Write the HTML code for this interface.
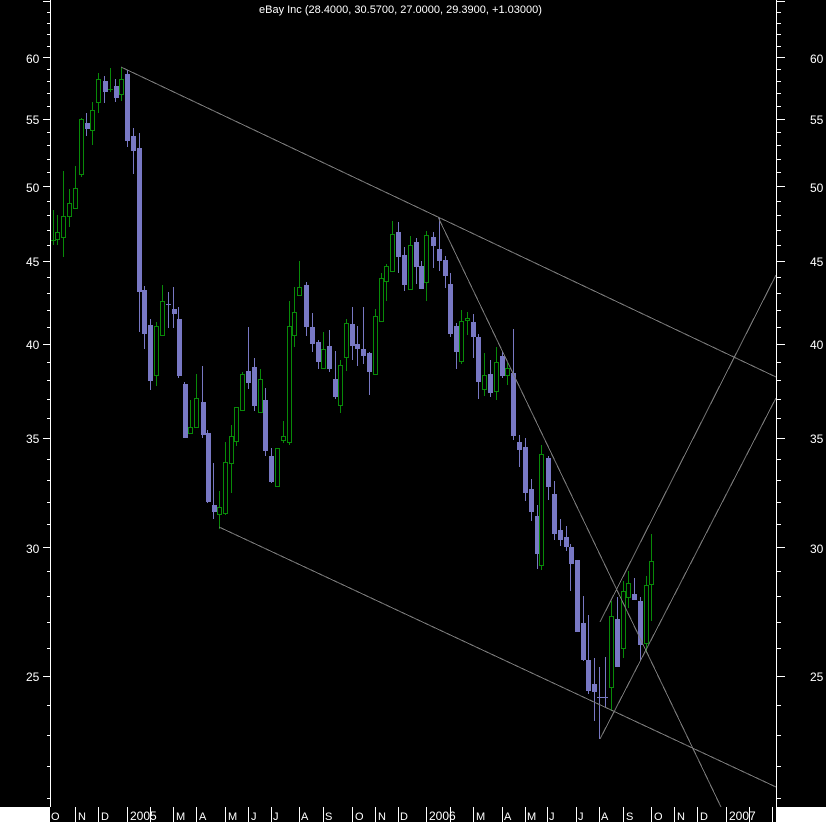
<!DOCTYPE html>
<html><head><meta charset="utf-8"><title>eBay Inc</title>
<style>
html,body{margin:0;padding:0;background:#000;width:826px;height:822px;overflow:hidden}
svg{display:block}
text{font-family:"Liberation Sans",sans-serif;font-size:12px;fill:#fff}
text.t{font-size:11px}
.m text{font-size:11px}
</style></head><body>
<svg width="826" height="822" viewBox="0 0 826 822" xmlns="http://www.w3.org/2000/svg">
<rect width="826" height="822" fill="#000"/>
<!-- blue wicks -->
<path fill="none" stroke="#7878c4" stroke-width="1" shape-rendering="crispEdges" d="M86.5 113V136M104.5 76V103M115.5 79V102M127.5 70V147M133.5 128V174M139.5 133V332M144.5 286V349M150.5 319V390M168.5 292V328M166 304.5H171M173.5 287V328M178.5 307V378M184.5 382V438M202.5 366V438M207.5 430V503M213.5 463V519M248.5 327V389M254.5 358V411M265.5 388V456M271.5 448V483M306.5 282V336M312.5 313V352M318.5 340V369M329.5 330V372M335.5 351V399M352.5 307V360M357.5 326V366M363.5 307V364M369.5 352V395M398.5 222V273M404.5 247V291M416.5 238V284M421.5 261V289M433.5 232V268M439.5 218V271M445.5 256V288M450.5 273V337M456.5 323V369M473.5 314V358M478.5 334V399M490.5 360V397M502.5 351V378M513.5 329V440M519.5 435V467M525.5 438V501M531.5 479V521M537.5 505V569M548.5 456V500M554.5 481V540M560.5 519V546M566.5 526V551M570.5 544V591M583.5 596V661M588.5 615V694M594.5 658V721M599.5 667V739M605.5 657V708M597 697.5H608M617.5 597V667M634.5 578V600M640.5 597V660"/>
<!-- blue bodies -->
<path fill="none" stroke="#7878c4" stroke-width="5" shape-rendering="crispEdges" d="M87.5 123V129M105.5 81V92M116.5 86V98M127.5 74V141M133.5 136V151M139.5 148V292M144.5 290V334M150.5 325V381M174.5 309V314M179.5 319V376M185.5 384V438M203.5 402V435M208.5 433V502M214.5 505V512M248.5 371V383M254.5 367V406M265.5 400V451M271.5 456V482M306.5 285V327M312.5 327V344M318.5 342V362M329.5 346V369M335.5 379V397M352.5 324V346M357.5 344V349M363.5 349V356M369.5 353V372M398.5 232V257M404.5 255V285M416.5 242V267M421.5 266V289M433.5 237V246M439.5 249V261M445.5 260V276M450.5 284V334M456.5 326V352M473.5 322V337M478.5 337V382M490.5 374V393M502.5 356V376M513.5 373V436M519.5 442V450M525.5 447V493M531.5 489V512M537.5 516V554M548.5 458V487M554.5 494V534M560.5 530V540M566.5 537V547M571.5 547V564M577.5 560V632M583.5 623V660M588.5 660V691M594.5 684V692M617.5 619V667M634.5 594V600M640.5 601V645"/>
<!-- green wicks -->
<path fill="none" stroke="#088a08" stroke-width="1" shape-rendering="crispEdges" d="M53.5 210V245M51 240.5H56M57.5 215V245M63.5 171V257M69.5 189V227M75.5 166V208M81.5 118V177M92.5 102V145M98.5 73V113M110.5 68V92M108 89.5H113M121.5 67V101M156.5 322V386M162.5 285V335M190.5 400V434M196.5 374V427M219.5 491V529M225.5 442V515M231.5 425V493M236.5 407V446M242.5 372V410M260.5 369V412M277.5 448V486M283.5 421V443M289.5 301V445M294.5 287V347M299.5 261V296M323.5 332V369M340.5 360V413M346.5 319V371M375.5 309V374M381.5 273V321M386.5 264V301M392.5 221V272M410.5 236V289M426.5 231V301M461.5 310V364M467.5 312V335M484.5 353V396M496.5 347V400M507.5 363V385M541.5 445V570M611.5 601V711M623.5 581V658M628.5 571V608M646.5 576V653M651.5 534V621"/>
<!-- green bodies -->
<path fill="#000" stroke="#088a08" stroke-width="1" shape-rendering="crispEdges" d="M55.5 232.5h4V239.5h-4zM61.5 216.5h4V237.5h-4zM67.5 203.5h4V216.5h-4zM73.5 188.5h4V208.5h-4zM79.5 119.5h4V174.5h-4zM90.5 110.5h4V130.5h-4zM96.5 79.5h4V102.5h-4zM119.5 79.5h4V94.5h-4zM154.5 326.5h4V375.5h-4zM160.5 301.5h4V335.5h-4zM188.5 427.5h4V433.5h-4zM194.5 398.5h4V427.5h-4zM217.5 507.5h4V514.5h-4zM223.5 462.5h4V513.5h-4zM229.5 436.5h4V463.5h-4zM234.5 407.5h4V441.5h-4zM240.5 374.5h4V410.5h-4zM258.5 379.5h4V412.5h-4zM275.5 448.5h4V486.5h-4zM281.5 436.5h4V440.5h-4zM287.5 326.5h4V442.5h-4zM292.5 312.5h4V335.5h-4zM297.5 287.5h4V295.5h-4zM321.5 349.5h4V368.5h-4zM338.5 365.5h4V405.5h-4zM344.5 323.5h4V357.5h-4zM373.5 316.5h4V374.5h-4zM379.5 278.5h4V321.5h-4zM384.5 266.5h4V281.5h-4zM390.5 234.5h4V271.5h-4zM408.5 245.5h4V289.5h-4zM424.5 235.5h4V282.5h-4zM459.5 321.5h4V361.5h-4zM465.5 318.5h4V320.5h-4zM482.5 375.5h4V389.5h-4zM494.5 362.5h4V391.5h-4zM505.5 368.5h4V375.5h-4zM539.5 454.5h4V565.5h-4zM609.5 616.5h4V687.5h-4zM621.5 591.5h4V648.5h-4zM626.5 583.5h4V597.5h-4zM644.5 585.5h4V643.5h-4zM649.5 561.5h4V584.5h-4z"/>
<!-- trend lines -->
<path fill="none" stroke="#7c7c7c" stroke-width="1" shape-rendering="crispEdges" d="M121 67L776 377M219 527L776 787M438 217L721 807M600 739L776 398M600 622L776 275"/>
<!-- axes -->
<path fill="none" stroke="#fff" stroke-width="1" shape-rendering="crispEdges" d="M50.5 0V807M776.5 0V807"/>
<path fill="none" stroke="#fff" stroke-width="1" shape-rendering="crispEdges" d="M43 1.5H50M47 12.5H50M47 23.5H50M47 34.5H50M47 46.5H50M43 57.5H50M47 69.5H50M47 81.5H50M47 93.5H50M47 106.5H50M43 119.5H50M47 132.5H50M47 145.5H50M47 159.5H50M47 172.5H50M43 186.5H50M47 201.5H50M47 215.5H50M47 230.5H50M47 245.5H50M43 261.5H50M47 277.5H50M47 293.5H50M47 310.5H50M47 327.5H50M43 344.5H50M47 362.5H50M47 380.5H50M47 399.5H50M47 418.5H50M43 438.5H50M47 459.5H50M47 480.5H50M47 502.5H50M47 524.5H50M43 547.5H50M47 571.5H50M47 596.5H50M47 622.5H50M47 648.5H50M43 676.5H50M47 705.5H50M47 735.5H50M47 766.5H50M47 798.5H50"/>
<path fill="none" stroke="#fff" stroke-width="1" shape-rendering="crispEdges" d="M777 1.5H785M777 12.5H781M777 23.5H781M777 34.5H781M777 46.5H781M777 57.5H785M777 69.5H781M777 81.5H781M777 93.5H781M777 106.5H781M777 119.5H785M777 132.5H781M777 145.5H781M777 159.5H781M777 172.5H781M777 186.5H785M777 201.5H781M777 215.5H781M777 230.5H781M777 245.5H781M777 261.5H785M777 277.5H781M777 293.5H781M777 310.5H781M777 327.5H781M777 344.5H785M777 362.5H781M777 380.5H781M777 399.5H781M777 418.5H781M777 438.5H785M777 459.5H781M777 480.5H781M777 502.5H781M777 524.5H781M777 547.5H785M777 571.5H781M777 596.5H781M777 622.5H781M777 648.5H781M777 676.5H785M777 705.5H781M777 735.5H781M777 766.5H781M777 798.5H781"/>
<!-- corner boxes -->
<rect x="0" y="807" width="50" height="15" fill="#fff"/>
<rect x="776" y="807" width="50" height="15" fill="#fff"/>
<!-- title -->
<text class="t" x="259" y="13">eBay Inc (28.4000, 30.5700, 27.0000, 29.3900, +1.03000)</text>
<!-- y labels left -->
<text x="26" y="63">60</text><text x="26" y="124">55</text><text x="26" y="192">50</text><text x="26" y="266">45</text><text x="26" y="349">40</text><text x="26" y="443">35</text><text x="26" y="553">30</text><text x="26" y="681">25</text>
<!-- y labels right -->
<text x="810" y="63">60</text><text x="810" y="124">55</text><text x="810" y="192">50</text><text x="810" y="266">45</text><text x="810" y="349">40</text><text x="810" y="443">35</text><text x="810" y="553">30</text><text x="810" y="681">25</text>
<!-- x labels -->
<g class="m"><text x="51" y="820">O</text><text x="78" y="820">N</text><text x="101" y="820">D</text><text x="176" y="820">M</text><text x="199" y="820">A</text><text x="228" y="820">M</text><text x="251" y="820">J</text><text x="273" y="820">J</text><text x="301" y="820">A</text><text x="325" y="820">S</text><text x="355" y="820">O</text><text x="378" y="820">N</text><text x="400" y="820">D</text><text x="476" y="820">M</text><text x="504" y="820">A</text><text x="527" y="820">M</text><text x="549" y="820">J</text><text x="578" y="820">J</text><text x="601" y="820">A</text><text x="626" y="820">S</text><text x="654" y="820">O</text><text x="677" y="820">N</text><text x="700" y="820">D</text></g>
<text x="130" y="820">2005</text><text x="429" y="820">2006</text><text x="729" y="820">2007</text>
<!-- x ticks -->
<path fill="none" stroke="#fff" stroke-width="1" shape-rendering="crispEdges" d="M75.5 807V822M98.5 807V822M127.5 807V822M150.5 807V822M173.5 807V822M196.5 807V822M225.5 807V822M248.5 807V822M271.5 807V822M299.5 807V822M323.5 807V822M352.5 807V822M375.5 807V822M398.5 807V822M426.5 807V822M450.5 807V822M473.5 807V822M502.5 807V822M525.5 807V822M547.5 807V822M576.5 807V822M599.5 807V822M623.5 807V822M651.5 807V822M674.5 807V822M697.5 807V822M726.5 807V822M749.5 807V822M772.5 807V822"/>
</svg>
</body></html>
